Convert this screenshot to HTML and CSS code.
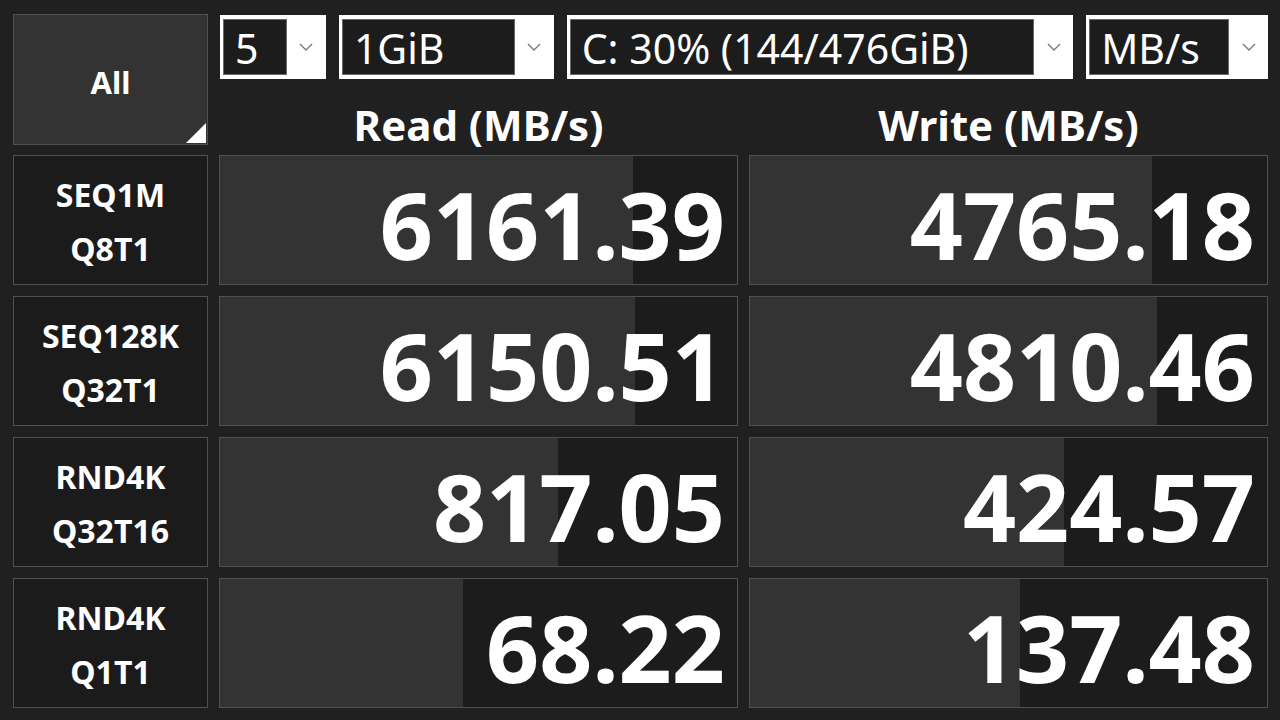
FILE: index.html
```html
<!DOCTYPE html>
<html>
<head>
<meta charset="utf-8">
<link rel="stylesheet" href="styles.css">
</head>
<body>
<div class="app">
  <div class="all-btn"><span>All</span><i class="corner"></i></div>
  <div class="top">
    <div class="selects">
      <div class="sel sel-count"><span class="val">5</span><span class="arrow"><svg width="14" height="8" viewBox="0 0 14 8"><path d="M1 1 L7 7 L13 1" fill="none" stroke="#7a7a7a" stroke-width="1.4"/></svg></span></div>
      <div class="sel sel-size"><span class="val">1GiB</span><span class="arrow"><svg width="14" height="8" viewBox="0 0 14 8"><path d="M1 1 L7 7 L13 1" fill="none" stroke="#7a7a7a" stroke-width="1.4"/></svg></span></div>
      <div class="sel sel-drive"><span class="val">C: 30% (144/476GiB)</span><span class="arrow"><svg width="14" height="8" viewBox="0 0 14 8"><path d="M1 1 L7 7 L13 1" fill="none" stroke="#7a7a7a" stroke-width="1.4"/></svg></span></div>
      <div class="sel sel-unit"><span class="val">MB/s</span><span class="arrow"><svg width="14" height="8" viewBox="0 0 14 8"><path d="M1 1 L7 7 L13 1" fill="none" stroke="#7a7a7a" stroke-width="1.4"/></svg></span></div>
    </div>
    <div class="heads">
      <div class="head">Read (MB/s)</div>
      <div class="head">Write (MB/s)</div>
    </div>
  </div>

  <div class="label"><span>SEQ1M</span><span>Q8T1</span></div>
  <div class="cell" style="--p:79.8%"><span>6161.39</span></div>
  <div class="cell" style="--p:77.8%"><span>4765.18</span></div>

  <div class="label"><span>SEQ128K</span><span>Q32T1</span></div>
  <div class="cell" style="--p:80.2%"><span>6150.51</span></div>
  <div class="cell" style="--p:78.8%"><span>4810.46</span></div>

  <div class="label"><span>RND4K</span><span>Q32T16</span></div>
  <div class="cell" style="--p:65.3%"><span>817.05</span></div>
  <div class="cell" style="--p:60.8%"><span>424.57</span></div>

  <div class="label"><span>RND4K</span><span>Q1T1</span></div>
  <div class="cell" style="--p:47%"><span>68.22</span></div>
  <div class="cell" style="--p:52.3%"><span>137.48</span></div>
</div>
</body>
</html>
```
FILE: styles.css
```css
html, body {
  margin: 0;
  padding: 0;
  background: #202020;
  width: 1280px;
  height: 720px;
  overflow: hidden;
  font-family: "Noto Sans", "Open Sans", "DejaVu Sans", sans-serif;
  color: #ffffff;
}

.app {
  display: grid;
  grid-template-columns: 195px 519px 519px;
  grid-template-rows: 130px repeat(4, 130px);
  column-gap: 11px;
  row-gap: 11px;
  padding: 14px 0 0 13px;
}

.all-btn {
  position: relative;
  background: #333333;
  border: 1px solid #505050;
  box-sizing: border-box;
  height: 131px;
  display: flex;
  align-items: center;
  justify-content: center;
  font-weight: 700;
  font-size: 31px;
  padding-top: 4px;
}

.corner {
  position: absolute;
  right: 1px;
  bottom: 1px;
  width: 0;
  height: 0;
  border-style: solid;
  border-width: 0 0 20px 20px;
  border-color: transparent transparent #ffffff transparent;
}

.top {
  grid-column: 2 / 4;
  display: flex;
  flex-direction: column;
}

.selects {
  display: flex;
  gap: 13px;
  margin: 1px 0 0 1px;
  height: 64px;
}

.sel {
  display: flex;
  background: #ffffff;
  box-sizing: border-box;
  padding: 4px 0 4px 3px;
  height: 64px;
}

.sel .val {
  flex: 1;
  background: #1c1c1c;
  box-shadow: inset 0 0 0 1px #6a6a6a;
  display: flex;
  align-items: center;
  padding-left: 12px;
  padding-top: 2px;
  font-size: 41px;
  font-weight: 400;
  white-space: nowrap;
  overflow: hidden;
}

.sel .arrow {
  width: 39px;
  display: flex;
  align-items: center;
  justify-content: center;
}

.sel-count { width: 106px; }
.sel-size { width: 215px; }
.sel-drive { width: 507px; }
.sel-unit { width: 182px; }

.heads {
  display: grid;
  grid-template-columns: 519px 519px;
  column-gap: 11px;
  flex: 1;
}

.head {
  display: flex;
  align-items: center;
  justify-content: center;
  font-weight: 700;
  font-size: 42px;
  padding-top: 17px;
}

.label {
  background: #1b1b1b;
  border: 1px solid #505050;
  box-sizing: border-box;
  display: flex;
  flex-direction: column;
  align-items: center;
  justify-content: center;
  gap: 12px;
  font-weight: 700;
  font-size: 32px;
  line-height: 42px;
  padding-top: 4px;
}

.cell {
  background: linear-gradient(to right, #333333 var(--p), #1c1c1c var(--p));
  border: 1px solid #505050;
  box-sizing: border-box;
  display: flex;
  align-items: center;
  justify-content: flex-end;
  padding-right: 12px;
  padding-top: 8px;
  font-weight: 700;
  font-size: 93px;
  line-height: 1;
}
```
